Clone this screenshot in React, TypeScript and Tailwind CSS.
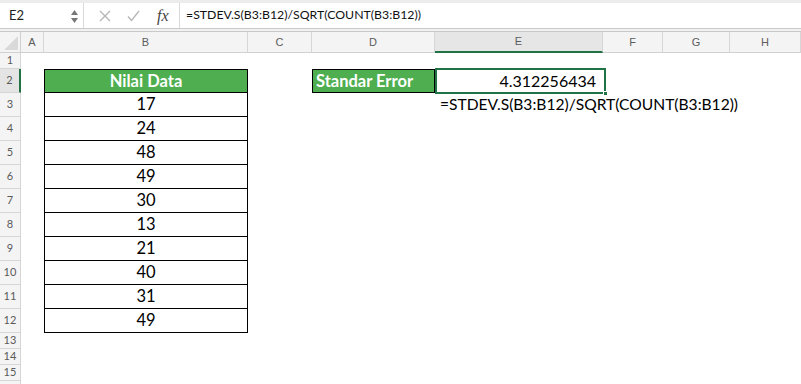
import React from "react";

const cols = ["A", "B", "C", "D", "E", "F", "G", "H"];
const values = [17, 24, 48, 49, 30, 13, 21, 40, 31, 49];

const cellFont = { fontFamily: "Lato, 'Open Sans', sans-serif" };

const RowHead = ({ n, active }: { n?: number; active?: boolean }) => (
	<div
		className={`flex items-center justify-center border-b border-r border-[#d6d6d6] text-[11px] text-[#5a5a5a] ${
			active ? "bg-[#e4e4e4] border-r-2 border-r-[#217346]" : "bg-[#f4f4f4]"
		}`}
		style={cellFont}
	>
		{n}
	</div>
);

const Blank = () => <div />;

const App = () => {
	return (
		<div className="w-[801px] h-[384px] overflow-hidden bg-white">
			<div className="h-[3px] bg-[#ececec]" />
			{/* formula bar */}
			<div className="h-[25px] flex items-center bg-white">
				<div className="w-[84px] h-full flex items-center justify-between pl-[9px] pr-[4px] border-r border-[#d9d9d9]">
					<span className="text-[13px] text-[#222]" style={cellFont}>
						E2
					</span>
					<svg width="9" height="16" viewBox="0 0 9 16">
						<path d="M4.5 2 L8 7 L1 7 Z" fill="#777" />
						<path d="M4.5 15 L8 10 L1 10 Z" fill="#777" />
					</svg>
				</div>
				<div className="w-[96px] h-full flex items-center border-r border-[#d9d9d9]">
					<svg width="12" height="12" viewBox="0 0 12 12" className="ml-[15px]">
						<path d="M1 1 L11 11 M11 1 L1 11" stroke="#b5b5b5" strokeWidth="1.3" />
					</svg>
					<svg width="13" height="12" viewBox="0 0 13 12" className="ml-[16px]">
						<path d="M1 6.5 L4.5 10.5 L12 1" stroke="#b5b5b5" strokeWidth="1.3" fill="none" />
					</svg>
					<span
						className="ml-[17px] italic text-[16px] text-[#444]"
						style={{ fontFamily: "'Liberation Serif', serif" }}
					>
						fx
					</span>
				</div>
				<span className="pl-[6px] text-[12.3px] text-[#111]" style={cellFont}>
					=STDEV.S(B3:B12)/SQRT(COUNT(B3:B12))
				</span>
			</div>
			<div className="h-[4px] border-y border-[#c9c9c9] bg-[#f2f2f2]" />
			{/* sheet */}
			<div className="grid grid-cols-[21px_23px_204px_64px_123px_168px_60px_67px_1fr] grid-rows-[21px_16px_repeat(11,24px)_repeat(4,16px)]">
				{/* column headers */}
				<div className="relative bg-[#f4f4f4] border-b border-r border-[#d0d0d0]">
					<svg width="16" height="16" viewBox="0 0 16 16" className="absolute left-[3px] top-[3px]">
						<path d="M15 1 L15 15 L1 15 Z" fill="#d9d9d9" />
					</svg>
				</div>
				{cols.map((c) => (
					<div
						key={c}
						className={`flex items-center justify-center text-[11px] text-[#5c5c5c] border-r border-[#d6d6d6] ${
							c === "E"
								? "bg-[#e6e6e6] border-b-2 border-b-[#217346]"
								: "bg-[#f4f4f4] border-b border-b-[#d0d0d0]"
						}`}
						style={{ fontFamily: "'Liberation Sans', sans-serif" }}
					>
						{c}
					</div>
				))}

				{/* row 1 */}
				<RowHead n={1} />
				{cols.map((c) => (
					<Blank key={c} />
				))}

				{/* row 2 */}
				<RowHead n={2} active />
				<Blank />
				<div
					className="flex items-center justify-center bg-[#4eae50] border border-black text-white font-bold text-[16.5px]"
					style={cellFont}
				>
					Nilai Data
				</div>
				<Blank />
				<div
					className="flex items-center pl-[3px] bg-[#4eae50] border border-black text-white font-bold text-[16.5px]"
					style={cellFont}
				>
					Standar Error
				</div>
				<div className="relative flex items-center justify-end pr-[7px] text-[16px] text-black" style={cellFont}>
					4.312256434
					<div className="absolute left-0 top-[-1px] w-[171px] h-[26px] border-2 border-[#217346]" />
					<div className="absolute left-[168px] top-[22px] w-[5px] h-[5px] bg-[#217346] border border-white" />
				</div>
				<Blank />
				<Blank />
				<Blank />

				{/* rows 3-12 */}
				{values.map((v, i) => (
					<React.Fragment key={i}>
						<RowHead n={i + 3} />
						<Blank />
						<div
							className="flex items-center justify-center border-x border-b border-black text-[16.5px] text-black"
							style={cellFont}
						>
							{v}
						</div>
						<Blank />
						<Blank />
						<div className="flex items-center pl-[5px] text-[15.6px] text-black whitespace-nowrap" style={cellFont}>
							{i === 0 ? "=STDEV.S(B3:B12)/SQRT(COUNT(B3:B12))" : ""}
						</div>
						<Blank />
						<Blank />
						<Blank />
					</React.Fragment>
				))}

				{/* rows 13-16 */}
				{[13, 14, 15].map((n) => (
					<React.Fragment key={n}>
						<RowHead n={n} />
						{cols.map((c) => (
							<Blank key={c} />
						))}
					</React.Fragment>
				))}
				<RowHead />
			</div>
		</div>
	);
};

export default App;
